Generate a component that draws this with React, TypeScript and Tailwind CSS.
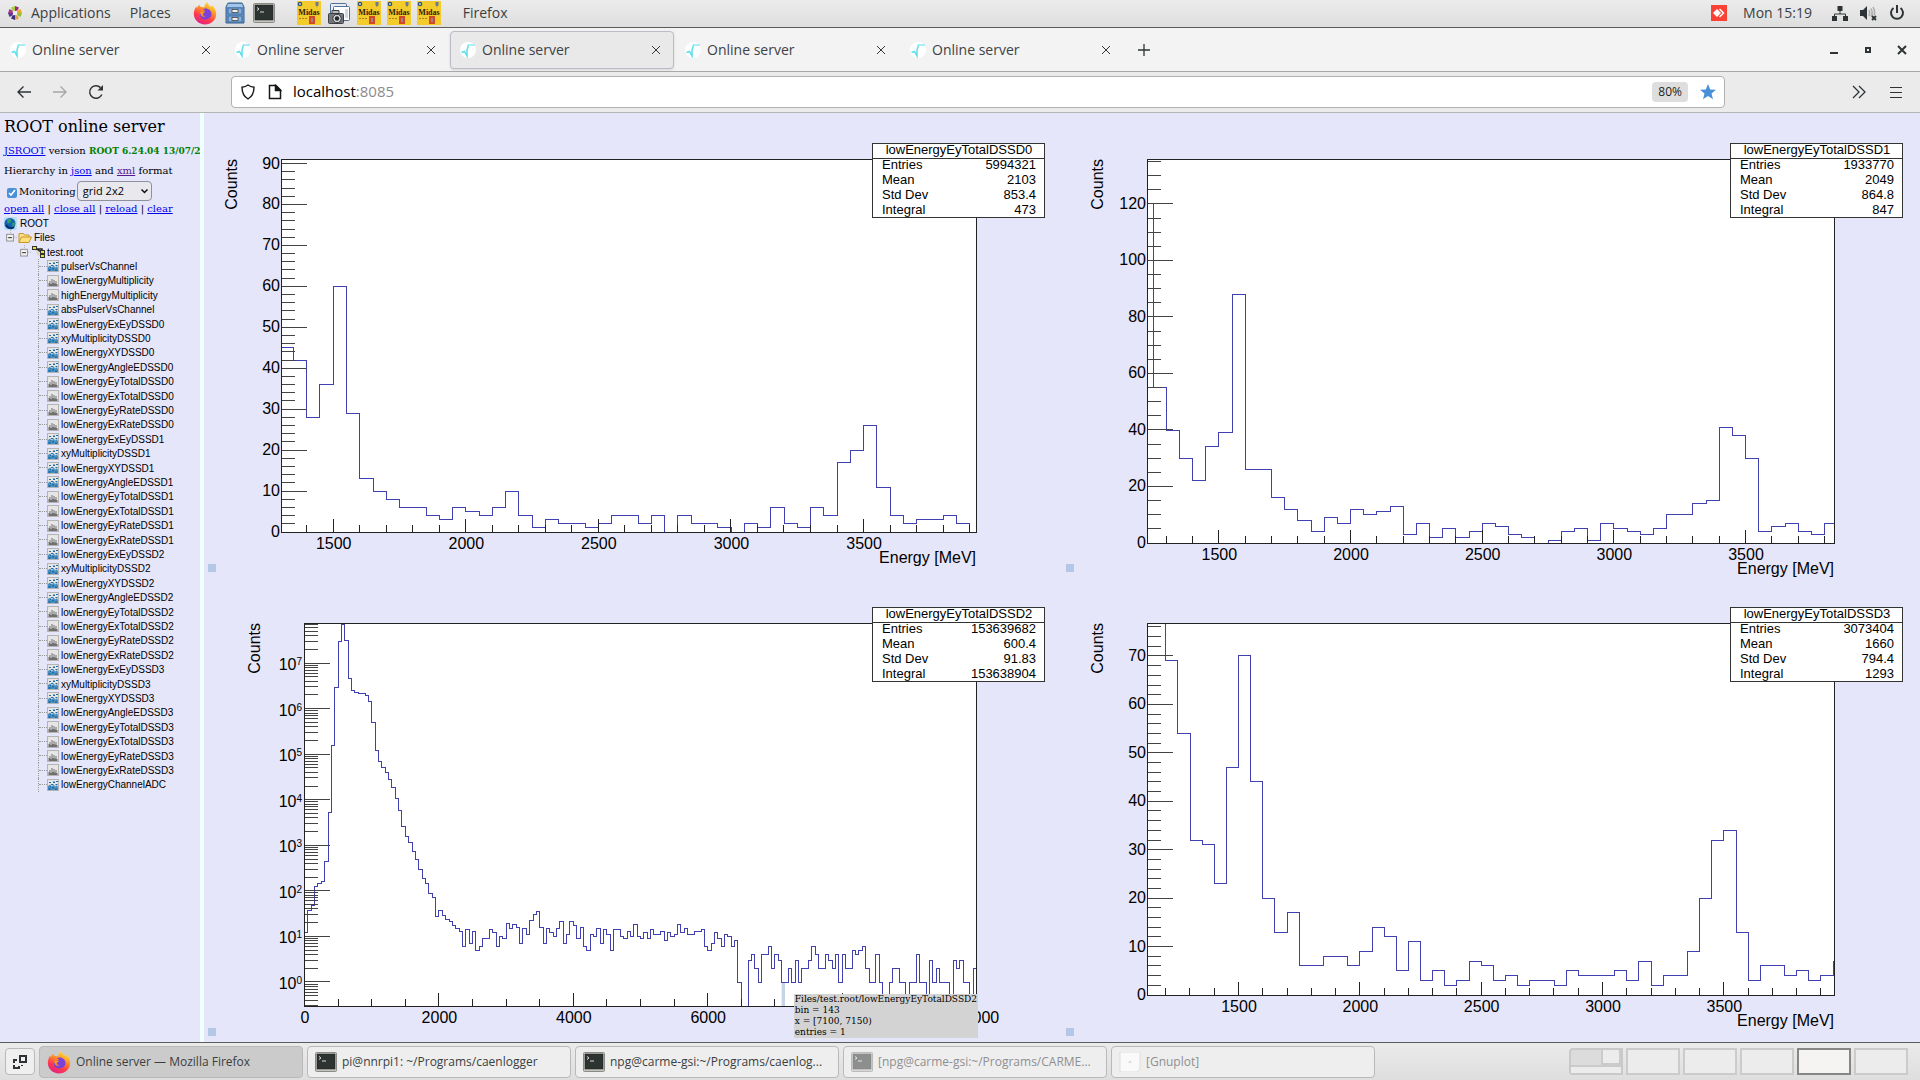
import React, { useState } from 'react';

interface HistogramProps {
  name: string;
  stats: [string, string][];
  frame: { left: number; right: number; top: number; bottom: number };
  xRange: [number, number];
  yRange: [number, number];
  xMajor: number;
  xMinor: number;
  yMajor?: number;
  yMinor?: number;
  log?: boolean;
  firstBin: number;
  binWidth: number;
  bins: number[];
  xTitle?: string;
  highlight?: number;
}

const HISTOGRAMS: HistogramProps[] = [
  {
    name: 'lowEnergyEyTotalDSSD0',
    stats: [['Entries', '5994321'], ['Mean', '2103'], ['Std Dev', '853.4'], ['Integral', '473']],
    frame: { left: 78, right: 773, top: 46, bottom: 419 },
    xRange: [1305, 3926],
    yRange: [0, 91.1],
    xMajor: 500,
    xMinor: 100,
    yMajor: 10,
    yMinor: 2,
    firstBin: 1300,
    binWidth: 50,
    bins: [
      45, 42, 28, 36, 60, 29, 13, 10, 8, 6, 6, 4, 3, 6, 5, 4, 6, 10, 4, 1, 3, 2, 2, 1, 2, 4, 4, 2, 4, 0, 4, 2, 2, 1, 0,
      2, 1, 6, 2, 1, 6, 4, 17, 20, 26, 11, 4, 2, 3, 3, 4, 2, 0,
    ],
    xTitle: 'Energy [MeV]',
  },
  {
    name: 'lowEnergyEyTotalDSSD1',
    stats: [['Entries', '1933770'], ['Mean', '2049'], ['Std Dev', '864.8'], ['Integral', '847']],
    frame: { left: 86, right: 773, top: 46, bottom: 430 },
    xRange: [1229, 3838],
    yRange: [0, 135.9],
    xMajor: 500,
    xMinor: 100,
    yMajor: 20,
    yMinor: 5,
    firstBin: 1200,
    binWidth: 50,
    bins: [
      120, 55, 40, 30, 22, 34, 39, 88, 26, 26, 16, 12, 8, 4, 9, 7, 12, 10, 11, 13, 3, 7, 2, 5, 2, 4, 7, 6, 3, 2, 0, 1,
      4, 5, 1, 7, 5, 4, 3, 5, 10, 10, 14, 15, 41, 38, 30, 4, 6, 7, 4, 3, 7,
    ],
    xTitle: 'Energy [MeV]',
  },
  {
    name: 'lowEnergyEyTotalDSSD2',
    stats: [['Entries', '153639682'], ['Mean', '600.4'], ['Std Dev', '91.83'], ['Integral', '153638904']],
    frame: { left: 101, right: 773, top: 46, bottom: 429 },
    xRange: [0, 10000],
    yRange: [-0.527, 7.879],
    xMajor: 2000,
    xMinor: 500,
    log: true,
    firstBin: 0,
    binWidth: 50,
    bins: [
      12, 37, 47, 128, 144, 160, 447, 5320, 155000, 2960000, 29800000, 71600000, 30800000, 4600000, 2540000, 2300000,
      2180000, 2100000, 1930000, 1430000, 496000, 120000, 68000, 51800, 39000, 27800, 18800, 10800, 5790, 2624, 1550,
      1150, 728, 486, 288, 192, 144, 89, 72, 28, 37, 29, 23, 21, 17, 15, 13, 6, 14, 7, 13, 5, 6, 9, 9, 14, 12, 6, 10,
      9, 19, 15, 18, 16, 7, 15, 11, 22, 31, 35, 16, 7, 15, 12, 10, 15, 21, 7, 11, 21, 17, 9, 16, 6, 5, 11, 10, 15, 7,
      14, 11, 5, 14, 14, 10, 9, 13, 10, 18, 10, 9, 12, 9, 14, 11, 11, 13, 8, 12, 10, 11, 18, 12, 15, 11, 11, 13, 13,
      14, 6, 5, 7, 12, 9, 6, 11, 10, 6, 8, 1, 0, 0, 3, 4, 2, 1, 4, 4, 6, 2, 4, 3, 1, 1, 2, 1, 3, 1, 2, 2, 3, 6, 4, 2,
      2, 4, 3, 2, 4, 1, 4, 2, 2, 5, 4, 5, 6, 2, 1, 1, 4, 1, 0, 0, 1, 2, 2, 1, 1, 0, 1, 1, 4, 1, 1, 0, 3, 1, 2, 1, 1,
      1, 0, 3, 2, 3, 1, 1, 0, 2,
    ],
    highlight: 142,
  },
  {
    name: 'lowEnergyEyTotalDSSD3',
    stats: [['Entries', '3073404'], ['Mean', '1660'], ['Std Dev', '794.4'], ['Integral', '1293']],
    frame: { left: 86, right: 773, top: 46, bottom: 418 },
    xRange: [1125, 3956],
    yRange: [0, 76.8],
    xMajor: 500,
    xMinor: 100,
    yMajor: 10,
    yMinor: 2,
    firstBin: 1100,
    binWidth: 50,
    bins: [
      120, 110, 69, 54, 32, 31, 23, 47, 70, 44, 20, 13, 17, 6, 6, 8, 8, 6, 9, 14, 12, 5, 11, 3, 5, 2, 3, 7, 6, 3, 4, 2,
      3, 3, 2, 5, 4, 4, 4, 5, 3, 7, 2, 4, 4, 9, 20, 32, 34, 13, 3, 6, 6, 4, 5, 3, 4, 7,
    ],
    xTitle: 'Energy [MeV]',
  },
];

type IconKind = 'h1' | 'h2';

const detectorItems = (n: number): [string, IconKind][] => [
  [`lowEnergyExEyDSSD${n}`, 'h2'],
  [`xyMultiplicityDSSD${n}`, 'h2'],
  [`lowEnergyXYDSSD${n}`, 'h2'],
  [`lowEnergyAngleEDSSD${n}`, 'h2'],
  [`lowEnergyEyTotalDSSD${n}`, 'h1'],
  [`lowEnergyExTotalDSSD${n}`, 'h1'],
  [`lowEnergyEyRateDSSD${n}`, 'h1'],
  [`lowEnergyExRateDSSD${n}`, 'h1'],
];

const TREE: [string, IconKind][] = [
  ['pulserVsChannel', 'h2'],
  ['lowEnergyMultiplicity', 'h1'],
  ['highEnergyMultiplicity', 'h1'],
  ['absPulserVsChannel', 'h2'],
  ...detectorItems(0),
  ...detectorItems(1),
  ...detectorItems(2),
  ...detectorItems(3),
  ['lowEnergyChannelADC', 'h2'],
];

const range = (from: number, to: number, step: number) => {
  const out: number[] = [];
  for (let v = Math.ceil(from / step) * step; v <= to; v += step) out.push(v);
  return out;
};

const Histogram: React.FC<HistogramProps> = (props) => {
  const { name, stats, frame, xRange, yRange, xMajor, xMinor, yMajor, yMinor, log, firstBin, binWidth, bins } = props;
  const { left, right, top, bottom } = frame;
  const px = (v: number) => left + ((v - xRange[0]) / (xRange[1] - xRange[0])) * (right - left);
  const py = (v: number) => bottom - ((v - yRange[0]) / (yRange[1] - yRange[0])) * (bottom - top);
  const level = (v: number) => (log ? (v > 0 ? py(Math.log10(v)) : bottom + 10) : py(v));

  let d = '';
  bins.forEach((v, i) => {
    const y = level(v).toFixed(1);
    d += i === 0 ? `M${px(firstBin).toFixed(1)},${y}` : `V${y}`;
    d += `H${px(firstBin + (i + 1) * binWidth).toFixed(1)}`;
  });

  const yTicks: { y: number; major: boolean }[] = [];
  if (log) {
    for (let e = -1; e <= 7; e++) {
      for (let m = 1; m < 10; m++) {
        const lv = e + Math.log10(m);
        if (lv >= yRange[0] && lv <= yRange[1]) yTicks.push({ y: py(lv), major: m === 1 });
      }
    }
  } else if (yMajor && yMinor) {
    range(yRange[0], yRange[1], yMinor).forEach((v) => yTicks.push({ y: py(v), major: v % yMajor === 0 }));
  }

  return (
    <svg viewBox="0 0 858 464" className="block h-full w-full" fontFamily="'Liberation Sans', Arial, sans-serif">
      <defs>
        <clipPath id={`clip-${name}`}>
          <rect x={left} y={top} width={right - left} height={bottom - top + 1} />
        </clipPath>
      </defs>
      {/* half a unit back, so that the vertical strokes fill whole pixels */}
      <g transform="translate(-0.5,0)">
        <rect x={left} y={top} width={right - left} height={bottom - top} fill="#fff" />
        {props.highlight !== undefined && (
          <rect
            x={px(props.highlight * binWidth)}
            y={py(0)}
            width={px(binWidth) - px(0)}
            height={bottom - py(0)}
            fill="#c6d5e6"
          />
        )}
        <path
          d={d}
          fill="none"
          stroke="#4040b2"
          strokeWidth="1"
          shapeRendering="crispEdges"
          clipPath={`url(#clip-${name})`}
        />
        <g stroke="#222" strokeWidth="1" fill="none" shapeRendering="crispEdges">
          {yTicks.map((t, i) => (
            <line key={i} x1={left} x2={left + (t.major ? 25 : 13)} y1={t.y} y2={t.y} stroke="#444" />
          ))}
          {range(xRange[0], xRange[1], xMinor).map((v) => (
            <line key={v} x1={px(v)} x2={px(v)} y1={bottom} y2={bottom - (v % xMajor === 0 ? 13 : 7)} />
          ))}
          <rect x={left} y={top} width={right - left} height={bottom - top} />
        </g>
      </g>

      <g fontSize="16" fill="#000">
        {range(xRange[0], xRange[1], xMajor).map((v) => (
          <text key={v} x={px(v)} y={bottom + 17} textAnchor="middle">{v}</text>
        ))}
        {!log && yMajor && range(yRange[0], yRange[1], yMajor).map((v) => (
          <text key={v} x={left - 2} y={py(v) + 5} textAnchor="end">{v}</text>
        ))}
        {log && range(0, yRange[1], 1).map((e) => (
          <text key={e} x={left - 3} y={py(e) + 7} textAnchor="end">
            10<tspan fontSize="10" dy="-5">{e}</tspan>
          </text>
        ))}
        <text transform={`translate(${left - 45},${top}) rotate(-90)`} textAnchor="end">Counts</text>
        {props.xTitle && <text x={right - 1} y={bottom + 31} textAnchor="end">{props.xTitle}</text>}
      </g>

      {/* stats box */}
      <g transform="translate(-0.5,-0.5)" shapeRendering="crispEdges" stroke="#333">
        <rect x="669" y="31" width="172" height="74" fill="#fff" />
        <line x1="669" x2="841" y1="46" y2="46" />
      </g>
      <g fontSize="13" fill="#000">
        <text x="755" y="41" textAnchor="middle">{name}</text>
        {stats.map(([label, value], i) => (
          <React.Fragment key={label}>
            <text x="678" y={56 + i * 15}>{label}</text>
            <text x="832" y={56 + i * 15} textAnchor="end">{value}</text>
          </React.Fragment>
        ))}
      </g>
      <rect x="4" y="451" width="8" height="8" fill="#b5c7e7" />
    </svg>
  );
};

/* ---------- icons ---------- */

const FirefoxIcon: React.FC<{ className?: string }> = ({ className }) => (
  <svg viewBox="0 0 24 24" className={className}>
    <defs>
      <linearGradient id="fx" x1="0.8" y1="0" x2="0.3" y2="1">
        <stop offset="0" stopColor="#fff04a" />
        <stop offset="0.35" stopColor="#ff9a22" />
        <stop offset="0.7" stopColor="#ff3b4e" />
        <stop offset="1" stopColor="#e01f85" />
      </linearGradient>
    </defs>
    <path
      d="M14 1c1.500 2 2 3.500 3.500 4.800C18.500 5.500 18.600 5 18.500 4c3 2.200 4.700 5.500 4.700 9 0 6-5 10.500-11.200 10.500S.8 18.800.8 12.800c0-3 1.200-5.600 2.600-7.600 0 1 .2 1.600.6 2 .4-1.300 1.300-2.600 2.400-3.400 0 1 .4 1.700 1.200 2.200 1.400-.3 2.600 0 3.600.6C11.500 4.500 12.500 2.500 14 1z"
      fill="url(#fx)"
    />
    <path d="M12.500 7.500c3.500 0 6 2.400 6 5.600s-2.700 5.400-6 5.400c-3.200 0-5.700-2-5.700-5 0-2.500 1.800-3.200 3.200-3 .8 0 1.500-.7 2.200-1.200-1-.2-1.300-1-2.500-1 .7-.5 1.700-.8 2.800-.8z" fill="#7a42d8" />
    <path d="M7 11c1.200-1.300 3.500-.8 4.800-.3.300 1-1.800 1.500-2 2.600 0 1.500 1.500 2 2.800 1.600-1.300 1.600-5 1.200-5.600-3.900z" fill="#ff9420" />
  </svg>
);

const CabinetIcon = () => (
  <svg viewBox="0 0 20 22" className="h-[22px] w-5">
    <path d="M3 1h14l2 4v16H1V5z" fill="#6d9bd0" stroke="#33608f" />
    <path d="M3 2h14l1 3H2z" fill="#a4c4e8" />
    <rect x="3" y="6" width="14" height="6" fill="#86afdd" stroke="#3d6a9c" />
    <rect x="3" y="14" width="14" height="6" fill="#86afdd" stroke="#3d6a9c" />
    <rect x="7" y="7.500" width="6" height="3" fill="#eee" stroke="#444" strokeWidth="0.8" />
    <rect x="7" y="15.500" width="6" height="3" fill="#eee" stroke="#444" strokeWidth="0.8" />
  </svg>
);

const TerminalIcon: React.FC<{ className?: string }> = ({ className }) => (
  <svg viewBox="0 0 22 20" className={className}>
    <rect x="0.500" y="0.500" width="21" height="19" rx="1" fill="#c4c4bf" stroke="#8a8a86" />
    <rect x="2" y="2" width="18" height="15" fill="#2c3330" stroke="#1b1f1d" strokeWidth="0.500" />
    <path d="M4 4.500l2 1.500-2 1.500M7 9h4" fill="none" stroke="#d8ddd8" />
  </svg>
);

const MidasIcon = () => (
  <svg viewBox="0 0 24 24" className="h-6 w-6">
    <rect width="24" height="24" fill="#f3cb2b" />
    <circle cx="3" cy="3" r="2.300" fill="#2d5478" />
    <circle cx="3" cy="3" r="1" fill="#c9d8c8" />
    <path d="M18.500 1h3v3l-1.500 2-1.500-2z" fill="#6b7a8e" />
    <text x="12" y="13.500" textAnchor="middle" fontSize="8" fontWeight="700" fontFamily="'Liberation Serif', serif" fill="#2b240c">Midas</text>
    <path d="M2 17.500h8" stroke="#9c8428" strokeDasharray="2 1" />
    <rect x="12" y="15" width="6" height="8" fill="#cf4a24" />
    <path d="M14 17h2v4h-2z" fill="#a97f86" />
  </svg>
);

const ScreenshotIcon = () => (
  <svg viewBox="0 0 24 24" className="h-6 w-6">
    <rect x="3.500" y="2.500" width="16" height="13" rx="1" fill="#e9ecef" stroke="#51719a" />
    <rect x="6.500" y="5.500" width="16" height="14" rx="1" fill="#fff" stroke="#51719a" />
    <path d="M18 8h3v9h-3z" fill="#cfdae6" />
    <rect x="1.500" y="12.500" width="15" height="10" rx="1" fill="#73777a" stroke="#3c4042" />
    <path d="M5 12V9.500h7V12" fill="#b6babc" stroke="#3c4042" />
    <circle cx="10" cy="17.500" r="4.200" fill="#d4d7d9" stroke="#333" />
    <circle cx="10" cy="17.500" r="2.200" fill="#22282b" />
  </svg>
);

const ActivitiesIcon = () => (
  <svg viewBox="0 0 16 16" className="h-4 w-4">
    <path d="M5.500 5.500L4 2.500 8 1v5z" fill="#a7cf3c" />
    <path d="M8 1l4 1.500-1.500 3L8 6z" fill="#9d2b7c" />
    <path d="M10.500 5.500l3-1.500L15 8h-5z" fill="#f0a32c" />
    <path d="M15 8l-1.500 4-3-1.500L10 8z" fill="#94bf36" />
    <path d="M10.500 10.500L12 13.500 8 15v-5z" fill="#e8a43c" />
    <path d="M8 15l-4-1.500 1.500-3L8 10z" fill="#3d3080" />
    <path d="M5.500 10.500l-3 1.500L1 8h5z" fill="#5a3795" />
    <path d="M1 8l1.500-4 3 1.500L6 8z" fill="#a83a86" />
    <circle cx="8" cy="8" r="2" fill="#ececec" />
  </svg>
);

const TabFavicon = () => (
  <svg viewBox="0 0 16 16" className="h-4 w-4 shrink-0">
    <circle cx="8" cy="8" r="8" fill="#fff" />
    <path d="M1.500 10.500l3-1 2.500 4.500V8l1.500-5H15" fill="none" stroke="#5be0ea" strokeWidth="1.500" />
    <path d="M8.500 3H15" stroke="#b5f1f5" strokeWidth="1.500" />
  </svg>
);

const HistIcon: React.FC<{ kind: IconKind }> = ({ kind }) => (
  <svg viewBox="0 0 12 12" className="h-3 w-3 shrink-0">
    <rect x="0.500" y="0.500" width="11" height="11" fill="#e6e6e6" stroke="#b4b4b4" />
    {kind === 'h1' ? (
      <path d="M1.500 11V8h1V6h1v3h1V4h1v4h1V5h1v3.500h1V6h1v3h1v2z" fill="#707070" />
    ) : (
      <g fill="#1f6ea6">
        <path d="M1 11V7l2-1.500 2 2 1.500-2.500L8 7.500l2-1 1 1.500V11z" fill="#4a90c2" />
        <path d="M1.500 9h2v2h-2zM5 8h2v1.500H5zM8 9.500h2V11H8zM2 3h2v1H2zM4 5h2v1H4zM6 2.500h2v1.500H6zM8.500 5h2v1.200h-2zM9 2h2v1H9zM3 7h1v1H3z" />
      </g>
    )}
  </svg>
);

const MinusBox = () => (
  <svg viewBox="0 0 14 15" className="h-full w-[14px] shrink-0">
    <path d="M6.500 0v4M10 7.500h4" stroke="#aaa" strokeDasharray="1 1" />
    <rect x="2.500" y="4.500" width="7" height="7" fill="#f2f2f2" stroke="#8d8d8d" />
    <path d="M4 8h4" stroke="#222" />
  </svg>
);

const GlobeIcon = () => (
  <svg viewBox="0 0 13 13" className="h-[13px] w-[13px] shrink-0">
    <rect width="13" height="13" rx="2" fill="#b9ddf3" />
    <circle cx="6" cy="6.500" r="5.500" fill="#1460b4" />
    <path d="M3 2.500l3-1 1.500 2L6 6 4 6.500l-1-2zM8 6l3-.5-.5 3-2 2z" fill="#2fa06a" />
    <path d="M2 8c2 3.500 6 4 8 2" stroke="#08306f" strokeWidth="2" fill="none" />
  </svg>
);

const FolderIcon = () => (
  <svg viewBox="0 0 14 12" className="h-3 w-[14px] shrink-0">
    <path d="M1 10.500v-9h4.500l1 1.500H11v2" fill="#fbe089" stroke="#c9962a" />
    <path d="M1 10.500L3.500 5H13.500l-2.500 5.500z" fill="#ffdf7a" stroke="#c9962a" />
  </svg>
);

const RootFileIcon = () => (
  <svg viewBox="0 0 14 12" className="h-3 w-[14px] shrink-0">
    <path d="M3 4h8v6H6z" fill="#d9d9cf" />
    <path d="M3 3v1M5 3h5v7M5 3l4 3" fill="none" stroke="#222" strokeWidth="1.500" />
    <rect x="0.500" y="0.500" width="4" height="3" fill="#e8e228" stroke="#333" />
    <rect x="8.500" y="4.500" width="4" height="3" fill="#e8e228" stroke="#333" />
    <rect x="8.500" y="8.500" width="4" height="3" fill="#e8e228" stroke="#333" />
  </svg>
);

/* ---------- desktop chrome ---------- */

const TopBar = () => (
  <header className="flex h-7 shrink-0 items-center border-b border-[#5c5c5c] bg-linear-to-b from-[#ececec] to-[#dedede] pb-[2px] text-sm text-[#3a3f42]">
    <button className="ml-[7px] flex items-center gap-2">
      <ActivitiesIcon />
      Applications
    </button>
    <button className="ml-[19px]">Places</button>
    <div className="ml-[22px] flex items-center gap-2">
      <button aria-label="Firefox"><FirefoxIcon className="block h-6 w-6" /></button>
      <button aria-label="Files"><CabinetIcon /></button>
      <button aria-label="Terminal"><TerminalIcon className="h-5 w-[22px]" /></button>
    </div>
    <div className="ml-[22px] flex items-center gap-[6px]">
      <button aria-label="Midas"><MidasIcon /></button>
      <button aria-label="Screenshot"><ScreenshotIcon /></button>
      <button aria-label="Midas"><MidasIcon /></button>
      <button aria-label="Midas"><MidasIcon /></button>
      <button aria-label="Midas"><MidasIcon /></button>
    </div>
    <button className="ml-[22px]">Firefox</button>
    <div className="ml-auto flex items-center pr-[15px]">
      <svg viewBox="0 0 16 16" className="mr-4 h-4 w-4">
        <rect width="16" height="16" fill="#fb4034" />
        <path d="M6 4l4 4-4 4-4-4z" fill="#fff" />
        <path d="M8.500 4l4 4-4 4" fill="none" stroke="#fff" strokeWidth="1.500" />
      </svg>
      <span className="mr-5">Mon 15:19</span>
      <svg viewBox="0 0 16 16" className="mr-3 h-4 w-4" fill="#2e3436">
        <path d="M5.500 1h5v5h-5zM0 11h5v5H0zM11 11h5v5h-5z" />
        <path d="M8 5v4M2.500 12V9h11v3" fill="none" stroke="#2e3436" />
      </svg>
      <svg viewBox="0 0 17 16" className="mr-3 h-4 w-[17px]">
        <path d="M0 5h3l4-4v14l-4-4H0z" fill="#2e3436" />
        <path d="M9 5c1 2 1 4 0 6M11 3.500c1.500 3 1.500 6 0 8M13 2c2 3.500 2 6 1 8" fill="none" stroke="#a9abac" strokeWidth="1.500" />
        <path d="M12 11l4 4M16 11l-4 4" stroke="#2e3436" strokeWidth="1.800" />
      </svg>
      <svg viewBox="0 0 16 16" className="h-4 w-4" fill="none" stroke="#2e3436" strokeWidth="2">
        <path d="M8 0v8M4.500 3a6 6 0 1 0 7 0" />
      </svg>
    </div>
  </header>
);

const TabBar = () => {
  const [active, setActive] = useState(2);
  return (
    <div className="flex h-11 shrink-0 items-center border-b border-[#a9a9a9] bg-[#f3f3f3] text-sm text-[#3d4246]">
      {[0, 1, 2, 3, 4].map((i) => (
        <div
          key={i}
          className={
            'mr-px flex h-[38px] w-56 items-center rounded border pl-[9px] pr-3 ' +
            (i === active ? 'border-[#bcbcc6] bg-[#e9e9e9] shadow-sm' : 'border-transparent')
          }
        >
          <button className="flex flex-1 items-center gap-[6px] text-left" onClick={() => setActive(i)}>
            <TabFavicon />
            Online server
          </button>
          <button aria-label="Close tab">
            <svg viewBox="0 0 10 10" className="h-[10px] w-[10px]" stroke="#33383b" fill="none">
              <path d="M1 1l8 8M9 1l-8 8" />
            </svg>
          </button>
        </div>
      ))}
      <button aria-label="New tab" className="ml-3">
        <svg viewBox="0 0 14 14" className="h-[14px] w-[14px]" stroke="#2e3436" fill="none">
          <path d="M7 1v12M1 7h12" strokeWidth="1.300" />
        </svg>
      </button>
      <div className="ml-auto flex items-center gap-6 pr-[13px] text-[#2e3436]">
        <button aria-label="Minimize">
          <svg viewBox="0 0 10 10" className="h-[10px] w-[10px]"><path d="M1 8h8" stroke="currentColor" strokeWidth="2" /></svg>
        </button>
        <button aria-label="Restore">
          <svg viewBox="0 0 10 10" className="h-[10px] w-[10px]"><path d="M3 3h4v4H3z" fill="none" stroke="currentColor" strokeWidth="2" /></svg>
        </button>
        <button aria-label="Close">
          <svg viewBox="0 0 10 10" className="h-[10px] w-[10px]"><path d="M1 1l8 8M9 1l-8 8" stroke="currentColor" strokeWidth="2" /></svg>
        </button>
      </div>
    </div>
  );
};

const NavBar = () => (
  <nav className="flex h-[41px] shrink-0 items-center border-b border-[#b4b4b4] bg-[#ebebeb] text-[#2e3436]">
    <div className="flex w-[231px] shrink-0 items-center gap-5 pl-4">
      <button aria-label="Back">
        <svg viewBox="0 0 16 16" className="h-4 w-4" fill="none" stroke="currentColor" strokeWidth="1.400">
          <path d="M15 8H2M7.500 2.500L2 8l5.500 5.500" />
        </svg>
      </button>
      <button aria-label="Forward" disabled className="text-[#a5a7a8]">
        <svg viewBox="0 0 16 16" className="h-4 w-4" fill="none" stroke="currentColor" strokeWidth="1.400">
          <path d="M1 8h13M8.500 2.500L14 8l-5.500 5.500" />
        </svg>
      </button>
      <button aria-label="Reload">
        <svg viewBox="0 0 16 16" className="h-4 w-4" fill="none" stroke="currentColor" strokeWidth="1.500">
          <path d="M13.800 10.500A6.300 6.300 0 1 1 12.500 3.600" />
          <path d="M15 1v5.500H9.500z" fill="currentColor" stroke="none" />
        </svg>
      </button>
    </div>
    <div className="mr-[127px] flex h-8 flex-1 items-center rounded border border-[#b2b2b2] bg-white pl-2 pr-2 text-sm">
      <svg viewBox="0 0 16 16" className="h-4 w-4" fill="none" stroke="#15191b" strokeWidth="1.400">
        <path d="M8 1c2 1.500 4 2 6 2.200 0 5-1 8.800-6 11.800C3 12 2 8.200 2 3.200 4 3 6 2.500 8 1z" />
      </svg>
      <svg viewBox="0 0 16 16" className="ml-[11px] h-4 w-4" fill="none" stroke="#15191b" strokeWidth="1.500">
        <path d="M2.500 1.500H9l4.500 4.500v8.500h-11z" />
        <path d="M8.500 1.500v5h5z" fill="#15191b" />
      </svg>
      <div className="ml-[10px] flex-1 text-[15px] text-[#8b8b8b]">
        <span className="text-black">localhost</span>:8085
      </div>
      <button className="mr-3 h-5 rounded-sm bg-[#dedede] px-[6px] text-xs text-[#1c1f21]">80%</button>
      <button aria-label="Bookmark">
        <svg viewBox="0 0 16 16" className="h-4 w-4" fill="#4a90d9">
          <path d="M8 0l2.200 5.400 5.800.4-4.500 3.700L13 15.200 8 12l-5 3.200 1.500-5.700L0 5.800l5.800-.4z" />
        </svg>
      </button>
    </div>
    <div className="flex items-center gap-6 pr-[18px]">
      <button aria-label="More tools">
        <svg viewBox="0 0 14 14" className="h-[14px] w-[14px]" fill="none" stroke="currentColor" strokeWidth="1.300">
          <path d="M1 1l6 6-6 6M7 1l6 6-6 6" />
        </svg>
      </button>
      <button aria-label="Menu">
        <svg viewBox="0 0 12 12" className="h-3 w-3" stroke="currentColor"><path d="M0 1.500h12M0 6.500h12M0 11.500h12" /></svg>
      </button>
    </div>
  </nav>
);

const link = 'text-[#0000ee] underline';

const Sidebar = () => (
  <aside className="w-[200px] shrink-0 overflow-hidden whitespace-nowrap pl-1 font-['DejaVu_Serif',serif] text-[10px] text-black">
    <h1 className="mt-1 text-base leading-5">ROOT online server</h1>
    <p className="mt-[7px] leading-[14px]">
      <a href="#jsroot" className={link}>JSROOT</a> version{' '}
      <b className="text-[9px] text-[#008000]">ROOT 6.24.04 13/07/2021</b>
    </p>
    <p className="mt-[6px] leading-[14px]">
      Hierarchy in <a href="#json" className={link}>json</a> and <a href="#xml" className="text-[#551a8b] underline">xml</a> format
    </p>
    <div className="mt-[3px] flex h-5 items-center">
      <input id="monitoring" type="checkbox" defaultChecked className="ml-[3px] mt-[3px] h-[10px] w-[10px] accent-[#4a90d9]" />
      <label htmlFor="monitoring" className="ml-[2px]">Monitoring</label>
      <div className="relative ml-px">
        <select
          aria-label="Layout"
          className="h-5 w-[75px] appearance-none rounded border border-[#8f8f9d] bg-[#e9e9ed] pl-[5px] font-['Open_Sans',sans-serif] text-[11px] leading-4"
        >
          <option>grid 2x2</option>
          <option>grid 1x2</option>
          <option>tabs</option>
        </select>
        <svg viewBox="0 0 7 5" className="pointer-events-none absolute right-1 top-2 h-[5px] w-[7px]" fill="none" stroke="#111" strokeWidth="1.500">
          <path d="M0.500 0.500l3 3 3-3" />
        </svg>
      </div>
    </div>
    <p className="mt-px leading-[14px]">
      <a href="#open" className={link}>open all</a> | <a href="#close" className={link}>close all</a> |{' '}
      <a href="#reload" className={link}>reload</a> | <a href="#clear" className={link}>clear</a>
    </p>
    <ul className="grid h-[576px] auto-rows-fr font-['Liberation_Sans',sans-serif]">
      <li className="flex items-center gap-[3px]"><GlobeIcon />ROOT</li>
      <li className="flex items-center"><MinusBox /><FolderIcon /><span className="ml-[2px]">Files</span></li>
      <li className="flex items-center pl-[14px]"><MinusBox /><RootFileIcon /><span className="ml-px">test.root</span></li>
      {TREE.map(([name, kind]) => (
        <li key={name} className="flex items-center pl-[34px]">
          <span className="h-full w-px border-l border-dotted border-[#9a9a9a]" />
          <span className="w-2 border-t border-dotted border-[#9a9a9a]" />
          <HistIcon kind={kind} />
          <a href={`#${name}`} className="ml-[2px]">{name}</a>
        </li>
      ))}
    </ul>
  </aside>
);

const TASKS = [
  { title: 'Online server — Mozilla Firefox', icon: 'firefox', active: true, hidden: false },
  { title: 'pi@nnrpi1: ~/Programs/caenlogger', icon: 'term', active: false, hidden: false },
  { title: 'npg@carme-gsi:~/Programs/caenlog...', icon: 'term', active: false, hidden: false },
  { title: '[npg@carme-gsi:~/Programs/CARME...', icon: 'term', active: false, hidden: true },
  { title: '[Gnuplot]', icon: 'doc', active: false, hidden: true },
];

const TaskBar = () => (
  <footer className="flex h-[38px] shrink-0 items-center border-t border-[#5c5c5c] bg-linear-to-b from-[#ebebeb] to-[#dedede] pl-[5px] pr-3 text-xs">
    <button aria-label="Show desktop" className="mr-1 flex h-[27px] w-[30px] items-center justify-center rounded border border-[#b9b9b9] bg-[#efefef]">
      <svg viewBox="0 0 14 14" className="h-[14px] w-[14px]" fill="none" stroke="#2e3436" strokeWidth="2">
        <path d="M7 1h6v6H7zM4 5H1v3M1 10v3h5v-2M9 10v1" />
      </svg>
    </button>
    <div className="flex gap-1">
      {TASKS.map((t) => (
        <button
          key={t.title}
          className={
            'flex h-8 w-[264px] items-center rounded border border-[#b9b9b9] pl-[7px] text-left ' +
            (t.active ? 'bg-[#cbcbcb] ' : 'bg-[#eeeeee] ') +
            (t.hidden ? 'text-[#8e8f90]' : 'text-[#3a3f42]')
          }
        >
          {t.icon === 'firefox' && <FirefoxIcon className="h-6 w-6 shrink-0" />}
          {t.icon === 'term' && <TerminalIcon className={'h-5 w-[22px] shrink-0' + (t.hidden ? ' opacity-50' : '')} />}
          {t.icon === 'doc' && (
            <svg viewBox="0 0 22 20" className="h-5 w-[22px] shrink-0">
              <path d="M1 0h20v17l-3 3H1z" fill="#fafafa" stroke="#ddd" />
              <path d="M9 11l2-3 2 3z" fill="#ddd" />
            </svg>
          )}
          <span className="ml-[5px] whitespace-nowrap">{t.title}</span>
        </button>
      ))}
    </div>
    <div className="ml-auto flex h-[27px] gap-[3px]">
      <div className="grid w-[54px] grid-cols-[30px_1fr] grid-rows-[15px_1fr] rounded-l border-2 border-[#c9c9c9] bg-[#dcdcdc]">
        <span />
        <span className="border-2 border-t-0 border-[#cbcbcb] bg-[#ececec]" />
        <span className="col-span-2 border-t-2 border-[#cbcbcb] bg-[#ececec]" />
      </div>
      {[1, 2, 3, 4, 5].map((i) => (
        <button
          key={i}
          aria-label={`Workspace ${i + 1}`}
          className={'w-[54px] border-2 ' + (i === 4 ? 'border-[#868684] bg-[#f5f4f2]' : 'border-[#cbcbcb] bg-[#ececec]')}
        />
      ))}
    </div>
  </footer>
);

const App = () => (
  <div className="flex h-screen flex-col overflow-hidden bg-[#e6e6fa] font-['Open_Sans','Noto_Sans',sans-serif]">
    <TopBar />
    <TabBar />
    <NavBar />
    <main className="flex min-h-0 flex-1">
      <Sidebar />
      <div className="w-1 shrink-0 bg-[#f0ffff]" />
      <div className="grid min-w-0 flex-1 grid-cols-2 grid-rows-2 pb-px">
        {HISTOGRAMS.map((h) => (
          <div key={h.name} className="relative min-h-0 min-w-0">
            <Histogram {...h} />
            {h.highlight !== undefined && (
              <div className="absolute bottom-[3px] right-[84px] whitespace-nowrap bg-[#d3d3d3] px-px font-['DejaVu_Serif',serif] text-[9px] leading-[11px] text-black">
                <p>Files/test.root/{h.name}</p>
                <p>bin = 143</p>
                <p>x = [7100, 7150)</p>
                <p>entries = 1</p>
              </div>
            )}
          </div>
        ))}
      </div>
    </main>
    <TaskBar />
  </div>
);

export default App;
